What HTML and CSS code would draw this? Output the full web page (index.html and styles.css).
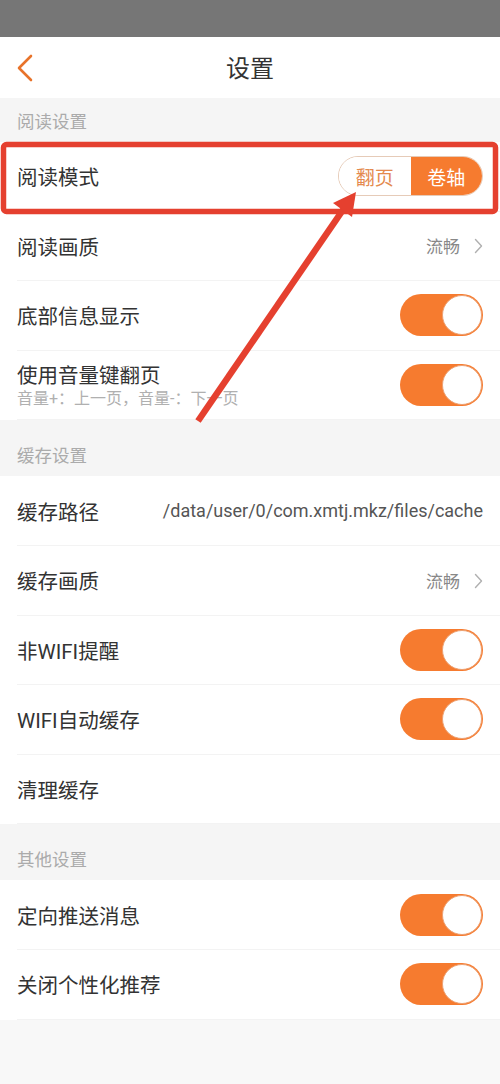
FILE: index.html
```html
<!DOCTYPE html>
<html lang="zh-CN">
<head>
<meta charset="utf-8">
<title>设置</title>
<link rel="stylesheet" href="styles.css">
</head>
<body>
<div class="page">
  <div class="statusbar"></div>
  <header class="topbar">
    <svg class="back" width="20" height="30" viewBox="0 0 20 30"><polyline points="15,3 3,15 15,27" fill="none" stroke="#e8732a" stroke-width="2.6" stroke-linecap="round" stroke-linejoin="round"/></svg>
    <h1 class="title">设置</h1>
  </header>

  <section class="group">
    <div class="group-title">阅读设置</div>
    <div class="list">
      <div class="row">
        <span class="label">阅读模式</span>
        <div class="segment">
          <span class="seg seg-off">翻页</span>
          <span class="seg seg-on">卷轴</span>
        </div>
      </div>
      <div class="row">
        <span class="label">阅读画质</span>
        <span class="value">流畅<svg class="chev" width="9" height="16" viewBox="0 0 9 16"><polyline points="1.5,1.5 7.5,8 1.5,14.5" fill="none" stroke="#b0b0b0" stroke-width="1.4" stroke-linecap="round" stroke-linejoin="round"/></svg></span>
      </div>
      <div class="row">
        <span class="label">底部信息显示</span>
        <span class="switch"><span class="knob"></span></span>
      </div>
      <div class="row">
        <div class="label-block">
          <span class="label">使用音量键翻页</span>
          <span class="sub">音量+：上一页，音量-：下一页</span>
        </div>
        <span class="switch"><span class="knob"></span></span>
      </div>
    </div>
  </section>

  <section class="group">
    <div class="group-title">缓存设置</div>
    <div class="list">
      <div class="row">
        <span class="label">缓存路径</span>
        <span class="path">/data/user/0/com.xmtj.mkz/files/cache</span>
      </div>
      <div class="row">
        <span class="label">缓存画质</span>
        <span class="value">流畅<svg class="chev" width="9" height="16" viewBox="0 0 9 16"><polyline points="1.5,1.5 7.5,8 1.5,14.5" fill="none" stroke="#b0b0b0" stroke-width="1.4" stroke-linecap="round" stroke-linejoin="round"/></svg></span>
      </div>
      <div class="row">
        <span class="label">非WIFI提醒</span>
        <span class="switch"><span class="knob"></span></span>
      </div>
      <div class="row">
        <span class="label">WIFI自动缓存</span>
        <span class="switch"><span class="knob"></span></span>
      </div>
      <div class="row">
        <span class="label">清理缓存</span>
      </div>
    </div>
  </section>

  <section class="group">
    <div class="group-title">其他设置</div>
    <div class="list">
      <div class="row">
        <span class="label">定向推送消息</span>
        <span class="switch"><span class="knob"></span></span>
      </div>
      <div class="row">
        <span class="label">关闭个性化推荐</span>
        <span class="switch"><span class="knob"></span></span>
      </div>
    </div>
  </section>

  <svg class="annotation" width="500" height="1084" viewBox="0 0 500 1084">
    <rect x="3.5" y="144.5" width="492" height="67" rx="3" fill="none" stroke="#e5402f" stroke-width="5.5"/>
    <line x1="198" y1="421" x2="347" y2="204" stroke="#e5402f" stroke-width="6.5" stroke-linecap="butt"/>
    <polygon points="356,192 333,203 352,217" fill="#e5402f"/>
  </svg>
</div>
</body>
</html>
```

FILE: styles.css
```css
* { box-sizing: border-box; }

html, body {
  margin: 0;
  padding: 0;
}

body {
  background: #f8f8f8;
  font-family: "Roboto", "Noto Sans CJK SC", sans-serif;
  color: #333;
}

.page {
  position: relative;
  width: 500px;
  min-height: 1084px;
  background: #f8f8f8;
}

.statusbar {
  height: 37px;
  background: #767676;
}

.topbar {
  height: 61px;
  background: #fff;
  display: flex;
  align-items: center;
  justify-content: center;
  position: relative;
}

.back {
  position: absolute;
  left: 16px;
  top: 16px;
}

.title {
  margin: 0;
  font-size: 24px;
  font-weight: 400;
  color: #333;
  line-height: 1;
  margin-top: 2px;
}

.group {
  background: #f5f5f5;
}

.group + .group {
  padding-top: 12px;
}

.group-title {
  height: 44px;
  display: flex;
  align-items: center;
  padding-left: 17px;
  font-size: 17.5px;
  color: #ababab;
}

.list {
  background: #fff;
}

.row {
  height: 69.6px;
  margin-left: 17px;
  padding-right: 17px;
  display: flex;
  align-items: center;
  justify-content: space-between;
  border-bottom: 1px solid #f3f3f3;
}

.label {
  font-size: 20.5px;
  color: #333;
}

.label-block {
  display: flex;
  flex-direction: column;
  padding-top: 1px;
}

.label-block .label {
  line-height: 26px;
}

.sub {
  font-size: 16px;
  color: #b0b0b0;
  line-height: 20px;
  margin-top: 0;
}

.value {
  display: flex;
  align-items: center;
  gap: 14px;
  font-size: 17px;
  color: #888;
}

.chev {
  margin-top: 1px;
}

.path {
  font-size: 18px;
  color: #555;
  white-space: nowrap;
}

.switch {
  width: 83px;
  height: 42px;
  border-radius: 21px;
  background: #f67b2f;
  display: flex;
  align-items: center;
  justify-content: flex-end;
  padding-right: 1px;
}

.knob {
  width: 40px;
  height: 40px;
  border-radius: 50%;
  background: #fff;
  border: 1.5px solid #eda172;
}

.segment {
  display: flex;
  width: 145px;
  height: 40px;
  border-radius: 20px;
  overflow: hidden;
  border: 1px solid #e6cbb8;
}

.seg {
  flex: 1;
  display: flex;
  align-items: center;
  justify-content: center;
  font-size: 19px;
}

.seg-off {
  background: #fff;
  color: #e48a4e;
}

.seg-on {
  background: #f67b2f;
  color: #fff;
}

.annotation {
  position: absolute;
  left: 0;
  top: 0;
  pointer-events: none;
}
```
